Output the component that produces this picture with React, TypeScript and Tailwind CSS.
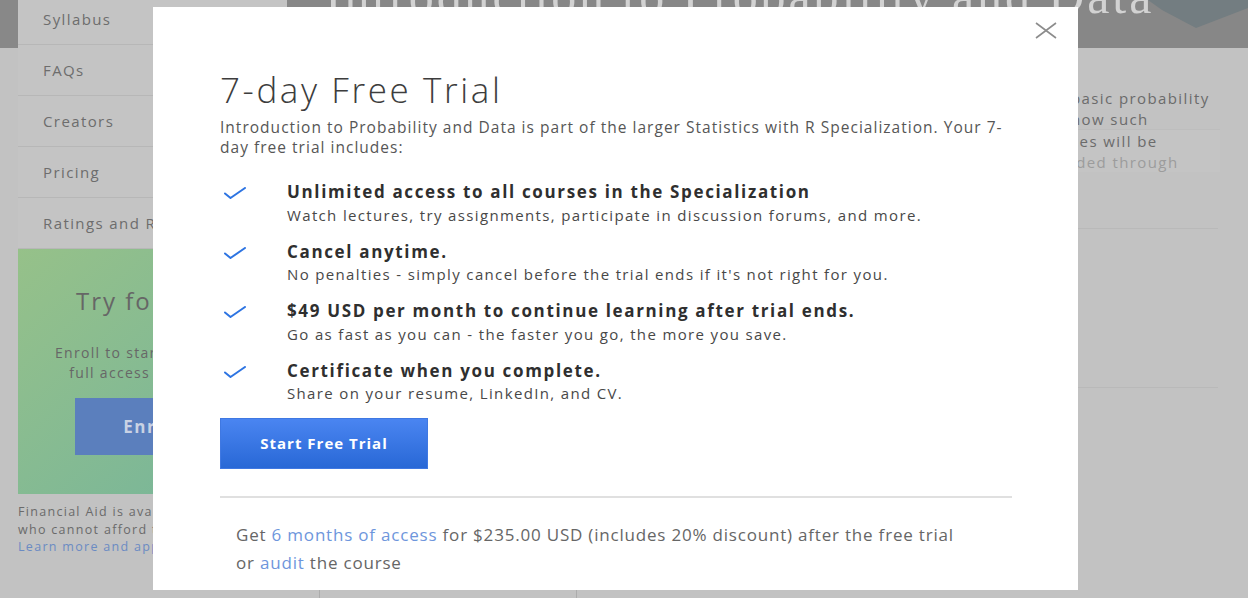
import React from "react";

const navItems = ["Syllabus", "FAQs", "Creators", "Pricing", "Ratings and Reviews"];

const perks = [
  {
    title: "Unlimited access to all courses in the Specialization",
    text: "Watch lectures, try assignments, participate in discussion forums, and more.",
  },
  {
    title: "Cancel anytime.",
    text: "No penalties - simply cancel before the trial ends if it's not right for you.",
  },
  {
    title: "$49 USD per month to continue learning after trial ends.",
    text: "Go as fast as you can - the faster you go, the more you save.",
  },
  {
    title: "Certificate when you complete.",
    text: "Share on your resume, LinkedIn, and CV.",
  },
];

const Check = () => (
  <svg width="22" height="12" viewBox="0 0 22 12" fill="none" className="mt-[6px] ml-[4px]">
    <path d="M1 6.5 L6.5 11 L21 1" stroke="#2d74e2" strokeWidth="2" strokeLinecap="round" strokeLinejoin="round" />
  </svg>
);

export default function App() {
  return (
    <div className="relative w-[1248px] h-[598px] overflow-hidden bg-[#c2c2c2] font-['Open_Sans',sans-serif]">
      {/* page behind the dim overlay */}
      <div className="flex h-full">
        <div className="w-[18px] shrink-0">
          <div className="h-[48px] bg-[#888888]" />
        </div>

        <aside className="w-[269px] shrink-0 flex flex-col">
          <nav className="-mt-[6px] bg-[#c4c4c4]">
            {navItems.map((n) => (
              <div
                key={n}
                className="h-[51px] border-b border-[#b7b7b7] pl-[25px] flex items-center text-[15px] tracking-[1.4px] text-[#6d6d6d] whitespace-nowrap"
              >
                {n}
              </div>
            ))}
          </nav>
          <div className="h-[245px] bg-gradient-to-br from-[#96c189] to-[#74b49b] flex flex-col items-center text-center">
            <div className="pt-[36px] text-[24px] leading-[32px] tracking-[2px] text-[#666666]">Try for Free</div>
            <div className="mt-[26px] text-[14px] leading-[20px] tracking-[1.3px] text-[#676767] whitespace-nowrap">
              Enroll to start your 7-day
              <br />
              full access to courses
            </div>
            <div className="mt-[15px] w-[156px] h-[57px] bg-[#5b7fbd] flex items-center justify-center text-[17px] tracking-[1.5px] font-bold text-[#c9d2e4]">
              Enroll
            </div>
          </div>
          <div className="mt-[9px] text-[12.5px] leading-[17.5px] tracking-[1.3px] text-[#6a6a6a] whitespace-nowrap">
            <div>Financial Aid is available for learners</div>
            <div>who cannot afford the fee.</div>
            <div className="text-[#6b8bc3]">Learn more and apply.</div>
          </div>
        </aside>

        <main className="flex-1 flex flex-col">
          <div className="relative h-[48px] bg-[#878787] overflow-hidden">
            <div className="-mt-[29px] pl-[38px] font-['Liberation_Serif',serif] text-[50px] leading-none tracking-[2.9px] text-[#d2d2d2] whitespace-nowrap">
              Introduction to Probability and Data
            </div>
            <svg className="absolute right-0 top-0" width="100" height="48" viewBox="0 0 100 48">
              <path d="M0 0 L100 0 L100 8 L48 28 L14 10 Z" fill="#737d81" />
            </svg>
          </div>

          <div className="flex-1 flex justify-end pr-[10px]">
            <div className="w-[167px] pt-[40px] text-[15px] leading-[20.5px] tracking-[1.4px] text-[#6b6b6b] whitespace-nowrap">
              <div>basic probability</div>
              <div>how such</div>
              <div className="pt-[1px] border-t border-[#bdbdbd] bg-[#c4c4c4] w-[149px]">
                <div>ces will be</div>
                <div className="text-[#9c9c9c]">ided through</div>
              </div>
              <div className="mt-[56px] w-[147px] border-t border-[#b9b9b9]" />
              <div className="mt-[158px] w-[147px] border-t border-[#b9b9b9]" />
            </div>
          </div>

          <div className="h-[8px] flex">
            <div className="w-[33px] border-r border-[#acacac]" />
            <div className="w-[257px] border-r border-[#acacac]" />
          </div>
        </main>
      </div>

      {/* modal */}
      <div className="absolute left-[153px] top-[7px] w-[925px] h-[583px] bg-white pl-[67px] pr-[64px] pt-[62px]">
        <button className="absolute right-[21px] top-[15px] w-[22px] h-[17px]">
          <svg width="22" height="17" viewBox="0 0 22 17" fill="none">
            <path d="M1 1 L21 16 M21 1 L1 16" stroke="#8c8c8c" strokeWidth="1.6" />
          </svg>
        </button>

        <h1 className="text-[35px] leading-[41px] tracking-[2.6px] font-light text-[#3d3d3d]">7-day Free Trial</h1>
        <p className="mt-[7px] text-[15.5px] leading-[20px] tracking-[1.02px] text-[#565656]">
          Introduction to Probability and Data is part of the larger Statistics with R Specialization. Your 7-day free
          trial includes:
        </p>

        <ul className="mt-[24px] flex flex-col gap-[16px]">
          {perks.map((p) => (
            <li key={p.title} className="flex">
              <div className="w-[67px] shrink-0">
                <Check />
              </div>
              <div>
                <div className="text-[17px] leading-[22px] tracking-[1.65px] font-bold text-[#2f2f2f]">{p.title}</div>
                <div className="mt-[1.5px] text-[15px] leading-[20px] tracking-[1.35px] text-[#484848]">{p.text}</div>
              </div>
            </li>
          ))}
        </ul>

        <button className="mt-[15px] w-[208px] h-[51px] border border-[#3f78e2] bg-gradient-to-b from-[#4a85f1] to-[#2868d6] text-white text-[15px] tracking-[1px] font-bold">
          Start Free Trial
        </button>

        <div className="mt-[27px] mr-[-2px] h-[2px] bg-[#e0e0e0] w-[792px]" />

        <p className="mt-[23px] pl-[16px] text-[17px] leading-[28px] tracking-[0.8px] text-[#666666]">
          Get <span className="text-[#6e96dc]">6 months of access</span> for $235.00 USD (includes 20% discount) after
          the free trial
          <br />
          or <span className="text-[#6e96dc]">audit</span> the course
        </p>
      </div>
    </div>
  );
}
